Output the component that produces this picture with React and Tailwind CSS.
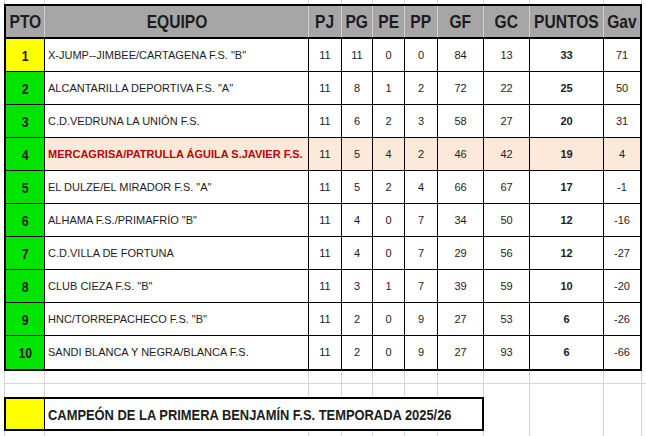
import React from 'react';

const W = ['w-[39px]','w-[264px]','w-[33px]','w-[31px]','w-[32px]','w-[33px]','w-[46px]','w-[46px]','w-[74px]','w-[36px]'];
const HEAD = ['PTO','EQUIPO','PJ','PG','PE','PP','GF','GC','PUNTOS','Gav'];
const rows = [
  [1,'X-JUMP--JIMBEE/CARTAGENA F.S. "B"',11,11,0,0,84,13,33,71],
  [2,'ALCANTARILLA DEPORTIVA F.S. "A"',11,8,1,2,72,22,25,50],
  [3,'C.D.VEDRUNA LA UNIÓN F.S.',11,6,2,3,58,27,20,31],
  [4,'MERCAGRISA/PATRULLA ÁGUILA S.JAVIER F.S.',11,5,4,2,46,42,19,4],
  [5,'EL DULZE/EL MIRADOR F.S. "A"',11,5,2,4,66,67,17,-1],
  [6,'ALHAMA F.S./PRIMAFRÍO "B"',11,4,0,7,34,50,12,-16],
  [7,'C.D.VILLA DE FORTUNA',11,4,0,7,29,56,12,-27],
  [8,'CLUB CIEZA F.S. "B"',11,3,1,7,39,59,10,-20],
  [9,'HNC/TORREPACHECO F.S. "B"',11,2,0,9,27,53,6,-26],
  [10,'SANDI BLANCA Y NEGRA/BLANCA F.S.',11,2,0,9,27,93,6,-66],
];

function GridStrip({ h, bottom }) {
  return (
    <div className={`flex ml-[4px] ${h} ${bottom ? 'border-b border-[#d6d6d6]' : ''}`}>
      <div className="w-[2px] shrink-0 border-l border-[#d6d6d6]" />
      {W.map((w, i) => (
        <div key={i} className={`${w} shrink-0 ${i < 9 ? 'border-r border-[#d6d6d6]' : ''}`} />
      ))}
      <div className="w-[2px] shrink-0 border-r border-[#d6d6d6]" />
    </div>
  );
}

export default function App() {
  return (
    <div className="w-[646px] h-[436px] bg-white overflow-hidden font-['Liberation_Sans',Arial,sans-serif] text-[#1c1c1c]">
      <GridStrip h="h-[4px]" />
      <div className="ml-[4px] w-[638px] border-2 border-black">
        {/* header */}
        <div className="flex h-[33px] border-b-2 border-black bg-[#a6a6a6]">
          {HEAD.map((t, i) => (
            <div key={i} className={`${W[i]} shrink-0 flex items-center justify-center ${i < 9 ? 'border-r border-[#cfcfcf]' : ''}`}>
              <span className="inline-block font-bold text-[19px] leading-none scale-x-[0.82] whitespace-nowrap">{t}</span>
            </div>
          ))}
        </div>
        {rows.map((r, ri) => {
          const hl = r[0] === 4;
          return (
            <div key={ri} className={`flex h-[33px] ${ri < 9 ? 'border-b border-black' : 'h-[32px]'}`}>
              <div className={`${W[0]} shrink-0 flex items-center justify-center border-r border-black ${r[0] === 1 ? 'bg-[#ffff00]' : 'bg-[#00e400]'}`}>
                <span className="inline-block font-bold text-[15px] leading-none scale-x-[0.82]">{r[0]}</span>
              </div>
              <div className={`${W[1]} shrink-0 flex items-center pl-[3px] border-r border-black ${hl ? 'bg-[#fde9d9]' : ''}`}>
                <span className={`text-[11px] leading-none whitespace-nowrap ${hl ? 'font-bold text-[#c00000]' : ''}`}>{r[1]}</span>
              </div>
              {r.slice(2).map((v, ci) => {
                const idx = ci + 2;
                return (
                  <div key={idx} className={`${W[idx]} shrink-0 flex items-center justify-center ${idx < 9 ? 'border-r border-black' : ''} ${hl ? 'bg-[#fde9d9]' : ''}`}>
                    <span className={`text-[11px] leading-none ${idx === 8 ? 'font-bold' : ''}`}>{v}</span>
                  </div>
                );
              })}
            </div>
          );
        })}
      </div>
      <GridStrip h="h-[13px]" bottom />
      <GridStrip h="h-[13px]" />
      <div className="flex ml-[4px] h-[34px]">
        <div className="w-[480px] shrink-0 border-2 border-black flex">
          <div className="w-[39px] shrink-0 bg-[#ffff00] border-r border-black" />
          <div className="flex-1 flex items-center pl-[3px]">
            <span className="inline-block origin-left font-bold text-[15px] leading-none whitespace-nowrap scale-x-[0.86]">CAMPEÓN DE LA PRIMERA BENJAMÍN F.S. TEMPORADA 2025/26</span>
          </div>
        </div>
        <div className="w-[46px] shrink-0 border-r border-[#d6d6d6]" />
        <div className="w-[74px] shrink-0 border-r border-[#d6d6d6]" />
        <div className="w-[38px] shrink-0 border-r border-[#d6d6d6]" />
      </div>
      <GridStrip h="h-[20px]" />
    </div>
  );
}
